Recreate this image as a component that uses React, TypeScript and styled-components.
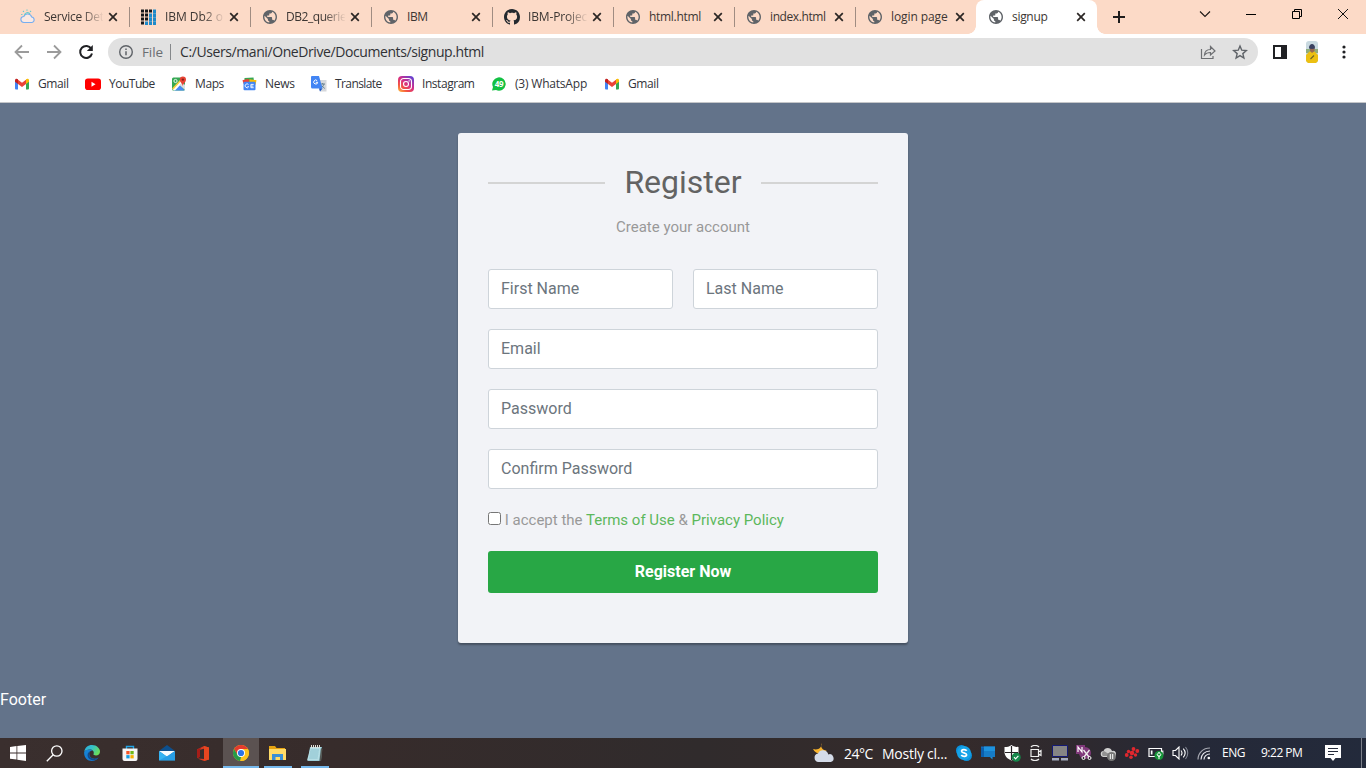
import React from "react";
import styled, { createGlobalStyle, css } from "styled-components";

const GlobalStyle = createGlobalStyle`
  * { box-sizing: border-box; }
  body { margin: 0; overflow: hidden; }
`;

const uiFont = `"Open Sans", "Noto Sans", sans-serif`;

const Screen = styled.div`
  width: 1366px;
  height: 768px;
  display: flex;
  flex-direction: column;
  overflow: hidden;
  font-family: ${uiFont};
`;

const TabStrip = styled.div`
  height: 34px;
  flex: none;
  display: flex;
  padding-left: 8px;
  background: #fcdac7;
`;

const Tab = styled.div<{ $active?: boolean; $divider?: boolean }>`
  position: relative;
  width: 121px;
  height: 34px;
  display: flex;
  align-items: center;
  padding-left: 12px;
  ${(p) =>
    p.$active &&
    css`
      background: #fff;
      border-radius: 8px 8px 0 0;
      &::before, &::after {
        content: "";
        position: absolute;
        bottom: 0;
        width: 8px;
        height: 8px;
      }
      &::before { left: -8px; background: radial-gradient(circle at 0 0, transparent 7.5px, #fff 8px); }
      &::after { right: -8px; background: radial-gradient(circle at 100% 0, transparent 7.5px, #fff 8px); }
    `}
  ${(p) =>
    p.$divider &&
    css`
      &::after {
        content: "";
        position: absolute;
        right: -1px;
        top: 7px;
        width: 1px;
        height: 20px;
        background: #a08c82;
      }
    `}
`;

const TabTitle = styled.span<{ $track: number; $fade?: boolean }>`
  width: 59px;
  margin-left: 8px;
  overflow: hidden;
  white-space: nowrap;
  font-size: 12px;
  line-height: 18px;
  color: #3c3633;
  letter-spacing: ${(p) => p.$track}px;
  ${(p) => p.$fade && css`mask-image: linear-gradient(90deg, #000 38px, transparent 60px);`}
`;

const TabClose = styled.svg`
  margin-left: 5px;
`;

const NewTab = styled.div`
  width: 44px;
  display: flex;
  align-items: center;
  justify-content: center;
`;

const WindowControls = styled.div`
  margin-left: auto;
  display: flex;
  height: 28px;
`;

const WindowButton = styled.div`
  width: 46px;
  display: flex;
  align-items: center;
  justify-content: center;
`;

const Toolbar = styled.div`
  height: 36px;
  flex: none;
  display: flex;
  align-items: center;
  background: #fff;
  padding-left: 14px;
`;

const NavIcons = styled.div`
  display: flex;
  gap: 16px;
  width: 94px;
`;

const Omnibox = styled.div`
  width: 1150px;
  height: 28px;
  border-radius: 14px;
  background: #e1e1e1;
  display: flex;
  align-items: center;
  padding: 0 10px;
  font-size: 14px;
`;

const Scheme = styled.span`
  margin-left: 8px;
  width: 28px;
  font-size: 13.5px;
  letter-spacing: -0.1px;
  color: #6b6e72;
`;

const Address = styled.span`
  border-left: 1px solid #85888b;
  padding-left: 9px;
  line-height: 16px;
  font-size: 14px;
  letter-spacing: -0.41px;
  color: #303135;
`;

const OmniboxActions = styled.div`
  margin-left: auto;
  display: flex;
  gap: 16px;
`;

const ToolbarActions = styled.div`
  display: flex;
  align-items: center;
  padding-left: 14px;
`;

const Avatar = styled.svg`
  margin: 0 24px 0 18px;
`;

const Bookmarks = styled.div`
  height: 33px;
  flex: none;
  display: flex;
  padding: 5px 0 0 14px;
  background: #fff;
  border-bottom: 1px solid #c4c6c9;
`;

const Bookmark = styled.div<{ $width: number; $track: number }>`
  width: ${(p) => p.$width}px;
  height: 18px;
  display: flex;
  align-items: center;
  gap: 8px;
  white-space: nowrap;
  font-size: 12px;
  letter-spacing: ${(p) => p.$track}px;
  color: #33343a;
  span { line-height: 18px; }
`;

const Page = styled.main`
  flex: 1;
  background: #63738a;
  padding-top: 30px;
  font-family: Roboto, sans-serif;
  display: flex;
  flex-direction: column;
`;

const Card = styled.form`
  width: 450px;
  height: 510px;
  align-self: center;
  padding: 30px;
  background: #f2f3f7;
  border-radius: 3px;
  box-shadow: 0 2px 2px rgba(0, 0, 0, 0.3);
`;

const Heading = styled.h2`
  margin: 0 0 15px;
  display: flex;
  align-items: center;
  justify-content: space-between;
  height: 38px;
  font-size: 32px;
  font-weight: 400;
  color: #636363;
  &::before, &::after {
    content: "";
    width: 117px;
    height: 2px;
    margin-top: 2px;
    background: #d4d4d4;
  }
`;

const Hint = styled.p`
  margin: 0 0 30px;
  height: 23px;
  line-height: 22.5px;
  font-size: 15px;
  text-align: center;
  color: #999;
`;

const FieldRow = styled.div`
  display: flex;
  gap: 20px;
  margin-bottom: 20px;
`;

const Field = styled.input`
  flex: 1;
  min-width: 0;
  height: 40px;
  padding: 5px 12px 7px;
  border: 1px solid #ced4da;
  border-radius: 3px;
  background: #fff;
  font: 16px Roboto, sans-serif;
  &::placeholder { color: #6c757d; opacity: 1; }
`;

const Consent = styled.label`
  display: block;
  height: 22px;
  margin-bottom: 20px;
  font-size: 15px;
  line-height: 22px;
  color: #999;
  input { width: 13px; height: 13px; margin: 0; vertical-align: 0; }
  a { color: #5cb85c; text-decoration: none; }
`;

const Submit = styled.button`
  width: 100%;
  height: 42px;
  border: 0;
  border-radius: 3px;
  padding: 0 0 2px;
  background: #28a745;
  color: #fff;
  font: bold 16px Roboto, sans-serif;
`;

const Footer = styled.footer`
  margin-top: 45px;
  line-height: 24px;
  font-size: 16px;
  color: #fff;
`;

const Taskbar = styled.div`
  height: 30px;
  flex: none;
  display: flex;
  background: linear-gradient(90deg, #3a2f2e 0, #372c2b 330px, #302b2c 700px, #352b2b 950px, #2d292f 1090px, #252938 1200px, #232a3b 1366px);
  color: #fff;
`;

const TaskItem = styled.div<{ $width?: number; $open?: boolean; $focused?: boolean }>`
  width: ${(p) => p.$width ?? 37}px;
  height: 30px;
  display: flex;
  align-items: center;
  justify-content: center;
  position: relative;
  background: ${(p) => (p.$focused ? "#5b5251" : "transparent")};
  ${(p) =>
    p.$open &&
    css`
      &::after {
        content: "";
        position: absolute;
        bottom: 0;
        left: ${p.$focused ? 0 : 5}px;
        right: ${p.$focused ? 0 : 4}px;
        height: 2px;
        background: #76b9ed;
      }
    `}
`;

const Tray = styled.div`
  margin-left: auto;
  display: flex;
  align-items: center;
  height: 30px;
`;

const Weather = styled.div`
  width: 139px;
  display: flex;
  align-items: center;
  white-space: nowrap;
  font-size: 14px;
`;

const Temperature = styled.span`
  margin-left: 9px;
  width: 38px;
  letter-spacing: -0.5px;
`;

const Forecast = styled.span`
  letter-spacing: -0.25px;
`;

const TrayIcon = styled.div`
  width: 24px;
  display: flex;
  justify-content: center;
`;

const TrayText = styled.span<{ $width: number }>`
  width: ${(p) => p.$width}px;
  padding: 0 0 1px 6px;
  white-space: nowrap;
  font-size: 12px;
  letter-spacing: -0.5px;
`;

const Notification = styled.div`
  width: 42px;
  display: flex;
  padding-left: 6px;
`;

const DesktopEdge = styled.div`
  width: 5px;
  height: 30px;
  border-left: 1px solid #7b7f89;
`;

const Globe = () => (
  <svg width="16" height="16" viewBox="0.57 0.57 22.86 22.86" fill="#5f6368">
    <path d="M12 2C6.480 2 2 6.480 2 12s4.480 10 10 10 10-4.480 10-10S17.520 2 12 2zm-1 17.930c-3.950-.49-7-3.850-7-7.930 0-.62.080-1.210.21-1.790L9 15v1c0 1.100.9 2 2 2v1.930zm6.900-2.540c-.26-.81-1-1.390-1.900-1.390h-1v-3c0-.55-.45-1-1-1H8v-2h2c.55 0 1-.45 1-1V7h2c1.100 0 2-.9 2-2v-.41c2.930 1.190 5 4.060 5 7.410 0 2.080-.8 3.970-2.100 5.390z" />
  </svg>
);

const CloudIcon = () => (
  <svg width="16" height="16" viewBox="0 0 16 16" fill="none" strokeWidth="1.100">
    <path d="M4 13.500a3 3 0 0 1-.2-6A4.200 4.200 0 0 1 11.700 8a2.800 2.800 0 0 1 .3 5.500z" stroke="#76aef0" fill="#fbe9e3" />
    <path d="M4.500 6.500A3 3 0 0 1 10 5M7 .5v1.200M3 2l.9.900M11 2l-.9.900M1.200 5.500h1.200" stroke="#61cbd0" />
  </svg>
);

const IbmIcon = () => (
  <svg width="16" height="16" viewBox="0 0 16 16">
    {[0, 4, 8, 12].map((x, i) => (
      <g key={x}>
        {[0, 4, 8, 12].map((y, j) => {
          const blue = (i === 1 && j > 2) || (i === 2 && j > 0) || i === 3;
          return <rect key={y} x={x} y={y + 0.5} width="3" height={blue ? 4 : 3} fill={blue ? "#1f8ac9" : "#16181b"} />;
        })}
      </g>
    ))}
  </svg>
);

const GithubIcon = () => (
  <svg width="16" height="16" viewBox="0 0 16 16" fill="#24292f">
    <path d="M8 0C3.58 0 0 3.58 0 8c0 3.540 2.290 6.530 5.470 7.590.4.070.55-.17.55-.38 0-.19-.01-.82-.01-1.490-2.010.37-2.530-.49-2.690-.94-.09-.23-.48-.94-.82-1.130-.28-.15-.68-.52-.01-.53.63-.01 1.080.58 1.230.82.72 1.210 1.870.87 2.330.66.070-.52.28-.87.51-1.070-1.780-.2-3.640-.89-3.640-3.950 0-.87.31-1.590.82-2.150-.08-.2-.36-1.020.08-2.120 0 0 .67-.21 2.200.82.64-.18 1.320-.27 2-.27s1.360.09 2 .27c1.530-1.040 2.200-.82 2.200-.82.44 1.100.16 1.920.08 2.120.51.56.82 1.270.82 2.150 0 3.070-1.870 3.750-3.650 3.950.29.25.54.73.54 1.480 0 1.070-.01 1.930-.01 2.200 0 .21.15.46.55.38A8.010 8.010 0 0 0 16 8c0-4.420-3.580-8-8-8z" />
  </svg>
);

const GmailIcon = () => (
  <svg width="16" height="16" viewBox="0 0 16 16">
    <path d="M1 3.500l3 2.200V13.500H2a1 1 0 0 1-1-1z" fill="#4285f4" />
    <path d="M12 5.700l3-2.200v9a1 1 0 0 1-1 1h-2z" fill="#34a853" />
    <path d="M4 3.700l4 3 4-3V8l-4 3-4-3z" fill="#ea4335" />
    <path d="M1 4.500C1 2.500 2.800 2.200 4 3.200V8L1 5.800z" fill="#c5221f" />
    <path d="M12 3.200c1.200-1 3-.7 3 1.300v1.300L12 8z" fill="#fbbc04" />
  </svg>
);

const YoutubeIcon = () => (
  <svg width="16" height="16" viewBox="0 0 16 16">
    <rect y="2.500" width="16" height="11.500" rx="2.800" fill="#f00" />
    <path d="M6.500 5.700l4 2.500-4 2.500z" fill="#fff" />
  </svg>
);

const MapsIcon = () => (
  <svg width="16" height="16" viewBox="0 0 16 16">
    <rect x="1" y="1.500" width="13" height="13" rx="1.500" fill="#35a853" />
    <path d="M3 14.500L8.500 8l5 6.500z" fill="#4a8af4" />
    <path d="M1.500 13.500L11 3l2 2-9 9.500z" fill="#fff" />
    <path d="M8.500 9l5.500 5V9l-2.500-2.500z" fill="#dbe0e5" />
    <path d="M1 12.500L9 4l1 1-7.500 8.500z" fill="#ffcf3f" />
    <circle cx="4.500" cy="5" r="1.600" fill="none" stroke="#fff" strokeWidth=".9" />
    <path d="M11.800 10.500c0-3-3-3.700-3-6.900a3.100 3.100 0 0 1 6.200 0c0 3.200-3.200 3.900-3.200 6.900z" fill="#e84335" />
    <circle cx="11.900" cy="3.600" r="1.200" fill="#8c2018" />
  </svg>
);

const NewsIcon = () => (
  <svg width="16" height="16" viewBox="0 0 16 16">
    <path d="M3.500 2l9-.5.700 5H3.500z" fill="#35a853" />
    <path d="M1.500 4.200l6-1.500 1 5h-6z" fill="#ea4335" />
    <path d="M8.500 3.200l7 1-1 4.500h-6z" fill="#fbbc04" />
    <rect x="2.500" y="5.700" width="12" height="8.500" rx="1" fill="#4285f4" />
    <path d="M7.500 8.600a1.900 1.900 0 1 0 .2 2.100H6.400M12.700 8.400H9.900v3.300h2.800M9.900 10.100h2.500" fill="none" stroke="#fff" strokeWidth=".9" />
  </svg>
);

const TranslateIcon = () => (
  <svg width="16" height="16" viewBox="0 0 16 16">
    <path d="M6 4h9.500v11.500H9z" fill="#d5d8dc" />
    <path d="M9 8h5M11.600 7v1.200M13 8c-.5 2-2 3.500-3.500 4.300M10.500 9.500l3.300 3" stroke="#607d8b" fill="none" strokeWidth=".9" />
    <path d="M1 0h7l3.500 12.500H1.500A1.500 1.500 0 0 1 0 11V1a1 1 0 0 1 1-1z" fill="#4285f4" />
    <path d="M8 12.500h3.500L9 15.500z" fill="#1a56c4" />
    <path d="M6.200 4.700a2 2 0 1 0 .5 1.600H4.800" fill="none" stroke="#fff" strokeWidth="1" />
  </svg>
);

const InstagramIcon = () => (
  <svg width="16" height="16" viewBox="0 0 16 16">
    <defs>
      <linearGradient id="insta" x1="0" y1="1" x2=".8" y2="0">
        <stop offset="0" stopColor="#ffc843" />
        <stop offset=".3" stopColor="#f4533f" />
        <stop offset=".6" stopColor="#d42d88" />
        <stop offset="1" stopColor="#6541d0" />
      </linearGradient>
    </defs>
    <rect width="16" height="16" rx="4" fill="url(#insta)" />
    <rect x="2.500" y="2.500" width="11" height="11" rx="3.200" fill="none" stroke="#fff" strokeWidth="1.100" />
    <circle cx="8" cy="8" r="2.500" fill="none" stroke="#fff" strokeWidth="1.100" />
    <circle cx="11.100" cy="4.900" r=".7" fill="#fff" />
  </svg>
);

const WhatsappIcon = () => (
  <svg width="16" height="16" viewBox="0 0 16 16">
    <path d="M1 14.500l1-3.500A6.700 6.700 0 1 1 5 14z" fill="#12c143" />
    <text x="8" y="10.700" textAnchor="middle" fontSize="8" fontWeight="700" fill="#fff" fontFamily="Open Sans" letterSpacing="-.3">49</text>
  </svg>
);

const tabs = [
  { title: "Service Det", icon: <CloudIcon />, track: -0.25, fade: true },
  { title: "IBM Db2 o", icon: <IbmIcon />, track: -0.05, fade: true },
  { title: "DB2_querie", icon: <Globe />, track: -0.45, fade: true },
  { title: "IBM", icon: <Globe />, track: -0.4 },
  { title: "IBM-Projec", icon: <GithubIcon />, track: -0.15, fade: true },
  { title: "html.html", icon: <Globe />, track: -0.3 },
  { title: "index.html", icon: <Globe />, track: -0.4 },
  { title: "login page", icon: <Globe />, track: -0.1 },
  { title: "signup", icon: <Globe />, track: -0.3 },
];

const bookmarks = [
  { label: "Gmail", icon: <GmailIcon />, width: 71, track: -0.4 },
  { label: "YouTube", icon: <YoutubeIcon />, width: 86, track: -0.5 },
  { label: "Maps", icon: <MapsIcon />, width: 70, track: -0.4 },
  { label: "News", icon: <NewsIcon />, width: 70, track: -0.3 },
  { label: "Translate", icon: <TranslateIcon />, width: 87, track: -0.6 },
  { label: "Instagram", icon: <InstagramIcon />, width: 93, track: -0.45 },
  { label: "(3) WhatsApp", icon: <WhatsappIcon />, width: 113, track: -0.2 },
  { label: "Gmail", icon: <GmailIcon />, width: 71, track: -0.4 },
];

const BrowserChrome = () => (
  <>
    <TabStrip>
      {tabs.map((tab, i) => (
        <Tab key={tab.title} $active={i === 8} $divider={i < 7}>
          {tab.icon}
          <TabTitle $track={tab.track} $fade={tab.fade}>{tab.title}</TabTitle>
          <TabClose width="10" height="10" viewBox="0 0 10 10">
            <path d="M1.200 1.200l7.600 7.600M8.800 1.200L1.200 8.800" stroke="#2b2624" strokeWidth="1.700" />
          </TabClose>
        </Tab>
      ))}
      <NewTab>
        <svg width="12" height="12" viewBox="0 0 12 12"><path d="M6 0v12M0 6h12" stroke="#1f1d1d" strokeWidth="2" /></svg>
      </NewTab>
      <WindowControls>
        <WindowButton><svg width="12" height="12" viewBox="0 0 12 12"><path d="M1 3.500l5 5 5-5" fill="none" stroke="#1a1614" strokeWidth="1.100" /></svg></WindowButton>
        <WindowButton><svg width="10" height="10" viewBox="0 0 10 10"><path d="M0 5.500h10" stroke="#000" /></svg></WindowButton>
        <WindowButton><svg width="10" height="10" viewBox="0 0 10 10"><path d="M.5 2.500h7v7h-7zM2.500 2.500v-2h7v7h-2" fill="none" stroke="#000" /></svg></WindowButton>
        <WindowButton><svg width="10" height="10" viewBox="0 0 10 10"><path d="M0 0l10 10M10 0L0 10" stroke="#111" /></svg></WindowButton>
      </WindowControls>
    </TabStrip>
    <Toolbar>
      <NavIcons>
        <svg width="16" height="16" viewBox="0 0 16 16"><path d="M15 8H2M8 1.500L1.500 8 8 14.500" fill="none" stroke="#9b9b9b" strokeWidth="1.800" /></svg>
        <svg width="16" height="16" viewBox="0 0 16 16"><path d="M1 8h13M8 1.500L14.500 8 8 14.500" fill="none" stroke="#9b9b9b" strokeWidth="1.800" /></svg>
        <svg width="16" height="16" viewBox="0 0 16 16"><path d="M13.300 4.800A6 6 0 1 0 14 9.500" fill="none" stroke="#202124" strokeWidth="2" /><path d="M14.800 1v6H8.800z" fill="#202124" /></svg>
      </NavIcons>
      <Omnibox>
        <svg width="16" height="16" viewBox="0 0 16 16"><circle cx="8" cy="8" r="6.300" fill="none" stroke="#5f6368" strokeWidth="1.400" /><path d="M8 7.200v4M8 4.500v1.500" stroke="#5f6368" strokeWidth="1.500" /></svg>
        <Scheme>File</Scheme>
        <Address>C:/Users/mani/OneDrive/Documents/signup.html</Address>
        <OmniboxActions>
          <svg width="16" height="16" viewBox="0 0 16 16" fill="none" stroke="#6d6f72" strokeWidth="1.200"><path d="M1.500 5v9.500H13V12" /><path d="M4.500 11c.2-3.500 2.500-5.500 6-5.500V2.500L15 7l-4.500 4V8.500C8 8.500 6 9 4.500 11z" /></svg>
          <svg width="16" height="16" viewBox="0 0 16 16" fill="none" stroke="#5f6368" strokeWidth="1.400"><path d="M8 2l1.750 4.200 4.550.4-3.450 3L11.900 14 8 11.650 4.100 14l1.050-4.400-3.450-3 4.550-.4z" /></svg>
        </OmniboxActions>
      </Omnibox>
      <ToolbarActions>
        <svg width="16" height="16" viewBox="0 0 16 16"><path d="M1 1h14v14H1z" fill="#202124" /><path d="M3 3h6v10H3z" fill="#fff" /></svg>
        <Avatar width="12" height="22" viewBox="0 0 12 22">
          <rect width="12" height="22" rx="3" fill="#c9d9e0" />
          <path d="M0 8h12v4H0z" fill="#8fac7c" />
          <path d="M0 20v-6l3.500-3.500h5L12 14v6l-2 2H2z" fill="#ecc012" />
          <path d="M4 7h4.500v3L6 12 4 10z" fill="#9b694e" />
          <path d="M3 7.500C2.500 1.500 9.500 1.500 9 7.500l-3 .5z" fill="#3a4160" />
          <path d="M4.500 18l3.500-3.500" stroke="#6c6425" strokeWidth="1.100" />
        </Avatar>
        <svg width="4" height="16" viewBox="0 0 4 16" fill="#202124"><circle cx="2" cy="3" r="1.600" /><circle cx="2" cy="8" r="1.600" /><circle cx="2" cy="13" r="1.600" /></svg>
      </ToolbarActions>
    </Toolbar>
    <Bookmarks>
      {bookmarks.map((b, i) => (
        <Bookmark key={i} $width={b.width} $track={b.track}>{b.icon}<span>{b.label}</span></Bookmark>
      ))}
    </Bookmarks>
  </>
);

const RegisterPage = () => (
  <Page>
    <Card>
      <Heading>Register</Heading>
      <Hint>Create your account</Hint>
      <FieldRow>
        <Field placeholder="First Name" />
        <Field placeholder="Last Name" />
      </FieldRow>
      <FieldRow><Field placeholder="Email" /></FieldRow>
      <FieldRow><Field type="password" placeholder="Password" /></FieldRow>
      <FieldRow><Field type="password" placeholder="Confirm Password" /></FieldRow>
      <Consent>
        <input type="checkbox" /> I accept the <a href="#">Terms of Use</a> &amp; <a href="#">Privacy Policy</a>
      </Consent>
      <Submit type="button">Register Now</Submit>
    </Card>
    <Footer>Footer</Footer>
  </Page>
);

const WindowsTaskbar = () => (
  <Taskbar>
    <TaskItem $width={36}>
      <svg width="16" height="16" viewBox="0 0 16 16" fill="#fff"><path d="M0 2l6.500-.9v6.400H0zM7.300 1L16 0v7.500H7.300zM0 8.400h6.500v6.200L0 13.700zM7.300 8.400H16V16l-8.700-1.200z" /></svg>
    </TaskItem>
    <TaskItem $width={36}>
      <svg width="17" height="17" viewBox="0 0 17 17" fill="none" stroke="#fff" strokeWidth="1.300"><circle cx="10.800" cy="6" r="5.200" /><path d="M7.200 9.800L.8 16.200" /></svg>
    </TaskItem>
    <TaskItem $width={40}>
      <svg width="16" height="16" viewBox="0 0 16 16">
        <defs>
          <linearGradient id="edgeTop" x1="0" y1="0" x2="1" y2=".5"><stop offset="0" stopColor="#2aa9e0" /><stop offset=".5" stopColor="#35c1c7" /><stop offset="1" stopColor="#69dd5c" /></linearGradient>
          <linearGradient id="edgeLow" x1="0" y1="0" x2="1" y2="1"><stop offset="0" stopColor="#1787d8" /><stop offset="1" stopColor="#1270c8" /></linearGradient>
        </defs>
        <path d="M.2 7C.8 2.500 4 0 8 0c5 0 8 3.500 8 6.500 0 2.500-1.800 4-4 4-1.500 0-2.800-.5-2.500-1.200C10.500 7 9 4.500 6 4.500 3 4.500 1 5.500.2 7z" fill="url(#edgeTop)" />
        <path d="M.2 7C1 5.300 3 4.500 6 4.500c1 0 2 .4 2.700 1C5 5.500 4.500 9 6 11.500c1.800 2.500 5.500 3 8.500 1C13 14.800 10.800 16 8 16c-5 0-8.300-4-7.800-9z" fill="url(#edgeLow)" />
        <path d="M6.500 6.300C4.500 8 5 11 6.800 12.800c2 1.700 5.200 1.400 7.700-.3-2.200 3.300-8 3.700-10.200.2C2.700 10 3.800 7 6.500 6.300z" fill="#114a8b" />
      </svg>
    </TaskItem>
    <TaskItem $width={35}>
      <svg width="16" height="17" viewBox="0 0 16 17"><path d="M4.500 4V1.500h7V4" fill="none" stroke="#22a5e6" strokeWidth="1.400" /><path d="M.5 3.500h15V14a2 2 0 0 1-2 2h-11a2 2 0 0 1-2-2z" fill="#f5f5f5" /><path d="M4.300 6h3.300v3.300H4.300z" fill="#f35325" /><path d="M8.400 6h3.300v3.300H8.400z" fill="#70b817" /><path d="M4.300 10.100h3.300v3.300H4.300z" fill="#129ce2" /><path d="M8.400 10.100h3.300v3.300H8.400z" fill="#f5af00" /></svg>
    </TaskItem>
    <TaskItem $width={39}>
      <svg width="16" height="16" viewBox="0 0 16 16"><path d="M0 6l8-6 8 6v9H0z" fill="#0d4f8d" /><path d="M0 6h16L8 12z" fill="#f8fbfd" /><path d="M0 6l8 5.500L16 6v9.500H0z" fill="#35b3f2" /><path d="M0 15.500L9 10.500l7-4.500v9.500z" fill="#1686d7" opacity=".45" /></svg>
    </TaskItem>
    <TaskItem $width={34}>
      <svg width="12" height="15" viewBox="0 0 12 15"><path d="M0 3.500L7 0l5 1.500v12L7 15 .5 12.500 7 13V2.700L3 3.800v7L0 12z" fill="#d83b20" /><path d="M0 3.500L4 1.500 3 4v7L0 12z" fill="#a51d18" /><path d="M7 0l5 1.500v12L7 15z" fill="#e64620" /></svg>
    </TaskItem>
    <TaskItem $width={3} />
    <TaskItem $width={36} $open $focused>
      <svg width="16" height="16" viewBox="0 0 16 16"><circle cx="8" cy="8" r="8" fill="#fcc31e" /><path d="M1.100 4A8 8 0 0 1 14.900 4H8L4.500 10z" fill="#e33b2e" /><path d="M1.100 4L4.600 10 8 12l-1 4A8 8 0 0 1 1.100 4z" fill="#259b48" /><path d="M8 4h6.900a8 8 0 0 1-7.400 12l4-6z" fill="#fcc31e" /><circle cx="8" cy="8" r="4" fill="#fff" /><circle cx="8" cy="8" r="3.100" fill="#2b73e8" /></svg>
    </TaskItem>
    <TaskItem $open>
      <svg width="17" height="15" viewBox="0 0 17 15"><path d="M0 0h6l1.500 2H16v12H0z" fill="#e5a311" /><path d="M0 3h17v11H0z" fill="#ffdb68" /><path d="M3 14V8h11v6h-3v-3H6.500v3z" fill="#398fd7" /></svg>
    </TaskItem>
    <TaskItem $open>
      <svg width="16" height="17" viewBox="0 0 16 17"><path d="M3 2h12l-1 14H1z" fill="#85bdc9" /><path d="M3.500 2H14l-2 13.500H0z" fill="#b6dee5" /><path d="M3.500 5h8.500M3 7h8.700M2.800 9h8.600M2.400 11H11M2 13h8.700" stroke="#7db7c6" strokeWidth=".7" /><path d="M4.500 0v3M6.500 0v3M8.500 0v3M10.500 0v3M12.500 0v3" stroke="#e0dfd9" strokeWidth="1" /><path d="M14 3l1.500 1-1.500 12h-1.500z" fill="#555753" /></svg>
    </TaskItem>
    <Tray>
      <Weather>
        <svg width="22" height="20" viewBox="0 0 22 20"><path d="M8.500 0c-1.300 4 .5 7 5 7.500-2.500 4.500-11 4.500-13.500-1.500 5 1.500 9-1 8.500-6z" fill="#f9b42d" /><path d="M5.500 19a4.300 4.300 0 0 1-.5-8.500 5.500 5.500 0 0 1 10.300.9A3.900 3.900 0 0 1 17.800 19z" fill="#d5dce9" /></svg>
        <Temperature>24°C</Temperature>
        <Forecast>Mostly cl...</Forecast>
      </Weather>
      <TrayIcon><svg width="16" height="16" viewBox="0 0 16 16"><circle cx="5.500" cy="5.500" r="5.500" fill="#0b91dc" /><circle cx="10.500" cy="10.500" r="5.500" fill="#0b91dc" /><circle cx="8" cy="8" r="7" fill="#15a3e8" /><path d="M10.700 5.800C9.500 4 5.500 4.200 5.600 6.200c.1 2 5 1.300 5 3.600 0 2-4 2.200-5.300.2" fill="none" stroke="#fff" strokeWidth="1.700" /></svg></TrayIcon>
      <TrayIcon><svg width="16" height="16" viewBox="0 0 16 16"><path d="M1 1.500h14V12H1z" fill="#1268b8" /><path d="M4 1.500h11V12h-2.500v2.500L10 12H4z" fill="#1e93de" /><path d="M4 6h11v6H4z" fill="#167cc8" /><path d="M1 3h3v9H1z" fill="#0b5eac" /></svg></TrayIcon>
      <TrayIcon><svg width="17" height="17" viewBox="0 0 17 17"><path d="M7.500 0c2 1.700 4.500 2 7 2v5c0 4-3 7-7 8.500C3.500 14 .5 11 .5 7V2c2.500 0 5-.3 7-2z" fill="#fff" /><path d="M7.500 1v14M1 7.500h13" stroke="#272326" strokeWidth="1.200" /><circle cx="12.200" cy="12.200" r="4.500" fill="#15884b" /><path d="M10 12.200l1.600 1.600 2.800-3" stroke="#fff" fill="none" strokeWidth="1.200" /></svg></TrayIcon>
      <TrayIcon><svg width="14" height="16" viewBox="0 0 14 16" fill="none" stroke="#eee" strokeWidth="1.200"><path d="M2 2C4-.1 8-.1 10 2M2 14c2 2.100 6 2.100 8 0M2 4.500h7.500v7H2zM9.500 7l2.500-1.500v5L9.500 9" /></svg></TrayIcon>
      <TrayIcon><svg width="16" height="16" viewBox="0 0 16 16"><path d="M.5 .5h15v11H.5z" fill="#858585" stroke="#141a75" /><path d="M0 13h7v2.500H0zM9 13h7v2.500H9z" fill="#a4abbe" /></svg></TrayIcon>
      <TrayIcon><svg width="16" height="16" viewBox="0 0 16 16"><path d="M0 0h9v9H0z" fill="#80397b" /><circle cx="9" cy="8" r="6" fill="#80397b" /><path d="M2 7V2l4 5V2" stroke="#fff" fill="none" strokeWidth="1.200" /><path d="M7.500 5l5.500 7M13.500 5L8 12" stroke="#eee" strokeWidth="1.300" /><circle cx="7.500" cy="13" r="1.500" fill="#302a30" stroke="#fff" /><circle cx="13.500" cy="13" r="1.500" fill="none" stroke="#fff" /></svg></TrayIcon>
      <TrayIcon><svg width="16" height="16" viewBox="0 0 16 16"><path d="M4 12a3 3 0 0 1-.5-6A4.500 4.500 0 0 1 12 6a3 3 0 0 1 2 6z" fill="#d0d0d0" /><path d="M3 11a3 3 0 0 1 1-5l8 5z" fill="#929292" /><circle cx="11.500" cy="11.500" r="4.500" fill="#777" /><path d="M10.300 9v5M12.700 9v5" stroke="#fff" /></svg></TrayIcon>
      <TrayIcon><svg width="16" height="16" viewBox="0 0 16 16" fill="#e1272e"><circle cx="8" cy="8" r="2.300" /><circle cx="9.500" cy="4" r="1.900" /><circle cx="13.300" cy="6" r="1.900" /><circle cx="11.500" cy="10" r="1.700" /><circle cx="7" cy="12.300" r="1.800" /><circle cx="2.700" cy="10" r="1.900" /><circle cx="4.500" cy="6.500" r="1.700" /></svg></TrayIcon>
      <TrayIcon><svg width="16" height="14" viewBox="0 0 16 14"><path d="M1 2.500h12.500v8H1zM14.800 4.500v4" stroke="#fff" fill="none" strokeWidth="1.200" /><path d="M2.800 4.500h1.700v4H2.800z" fill="#fff" /><circle cx="11" cy="9.500" r="4.500" fill="#169338" /><path d="M11 6.200l1.900 2.600-1.900 2-1.900-2zM11 9v4" fill="none" stroke="#fff" /></svg></TrayIcon>
      <TrayIcon><svg width="17" height="14" viewBox="0 0 17 14" fill="none" stroke="#fff" strokeWidth="1.100"><path d="M1 4.500h2.500L7 1v12L3.500 9.500H1zM9 4.500c1.200 1.500 1.200 3.500 0 5M11.300 2.700c2.200 2.500 2.200 6 0 8.600" /><path d="M13.500 1c3 3.500 3 8.500 0 12" stroke="#858995" /></svg></TrayIcon>
      <TrayIcon><svg width="14" height="14" viewBox="0 0 14 14" fill="none" stroke="#e7e8ed" strokeWidth="1.200"><path d="M1 13.500C1 7 6 2 13 2" stroke="#a6a8b1" /><path d="M4 13.500C4 8.500 8 5 13 5M7 13.500C7 10.500 9.500 8 13 8" /><circle cx="11.800" cy="12" r="1.300" fill="#fff" stroke="none" /></svg></TrayIcon>
      <TrayText $width={39}>ENG</TrayText>
      <TrayText $width={64}>9:22 PM</TrayText>
      <Notification><svg width="16" height="17" viewBox="0 0 16 17"><path d="M0 0h16v13h-5.500L8 16l-2.500-3H0z" fill="#fff" /><path d="M3 3.500h10M3 6.500h10M3 9.500h6" stroke="#252b3b" /></svg></Notification>
      <DesktopEdge />
    </Tray>
  </Taskbar>
);

export default function App() {
  return (
    <Screen>
      <GlobalStyle />
      <BrowserChrome />
      <RegisterPage />
      <WindowsTaskbar />
    </Screen>
  );
}
